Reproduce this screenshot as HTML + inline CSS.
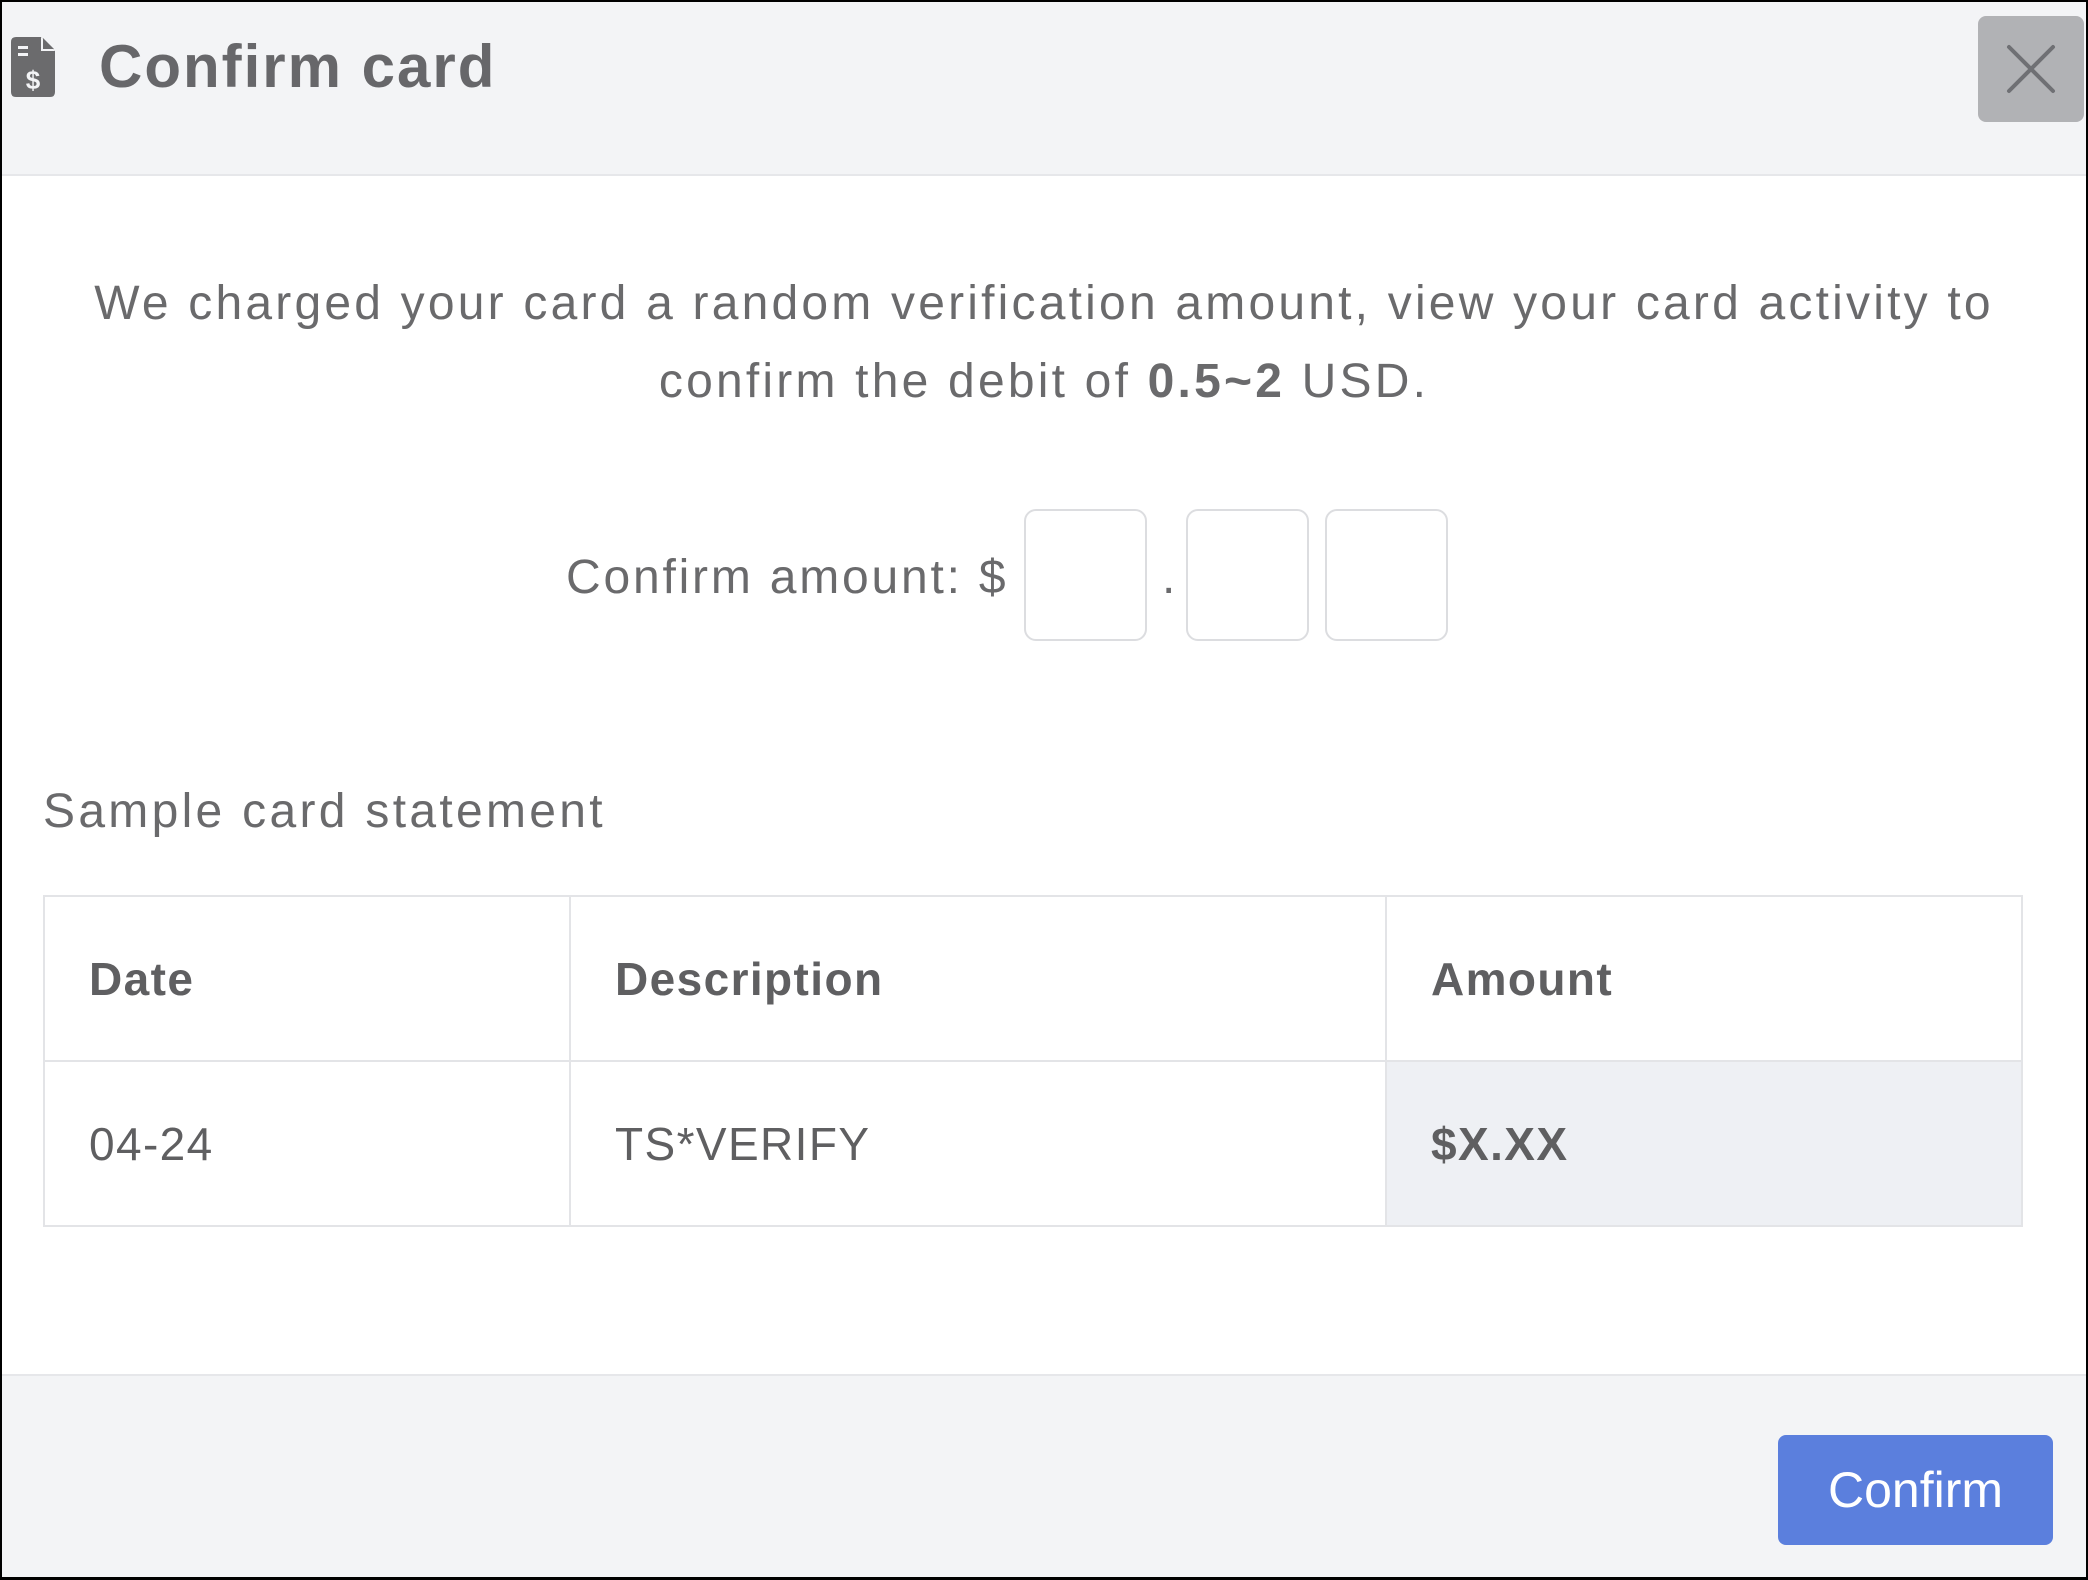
<!DOCTYPE html>
<html><head><style>
html,body{margin:0;padding:0}
body{width:2088px;height:1580px;position:relative;background:#000;font-family:"Liberation Sans",sans-serif;overflow:hidden}
.m{position:absolute;left:2px;top:2px;width:2084px;height:1575px;background:#fff;overflow:hidden}
.hd{position:absolute;left:0;top:0;width:2084px;height:172px;background:#f3f4f6;border-bottom:2px solid #e6e7ea}
.ft{position:absolute;left:0;top:1372px;width:2084px;height:210px;background:#f3f4f6;border-top:2px solid #e6e7ea}
.t{position:absolute;white-space:nowrap;color:#6a6a6c}
.box{position:absolute;top:507px;width:123px;height:132px;border:2px solid #dcdde0;border-radius:12px;background:#fff;box-sizing:border-box}
table{position:absolute;left:41px;top:893px;width:1980px;border-collapse:collapse}
td{border:2px solid #e3e4e7;font-size:46px;color:#5f5f61;padding:0 0 0 44px;height:163px;letter-spacing:1.4px}
</style></head><body>
<div class="m">
<div class="hd">
<svg style="position:absolute;left:9px;top:35px" width="44" height="60" viewBox="0 0 44 60"><path d="M5 0H30L44 14V55Q44 60 39 60H5Q0 60 0 55V5Q0 0 5 0Z" fill="#6b6b6d"/><path d="M30 0V14H44" fill="#f3f4f6"/><path d="M32 1V12H43" fill="#6b6b6d"/><rect x="7" y="9" width="10" height="3" fill="#f3f4f6"/><rect x="7" y="16" width="10" height="3" fill="#f3f4f6"/><text x="22" y="52" font-size="26" font-weight="bold" fill="#f3f4f6" text-anchor="middle" font-family="Liberation Sans">$</text></svg>
<div class="t" style="left:97px;top:30px;font-size:60px;font-weight:bold;color:#67676a;letter-spacing:2px">Confirm card</div>
<div style="position:absolute;left:1976px;top:14px;width:106px;height:106px;background:#b1b2b5;border-radius:8px">
<svg width="106" height="106" viewBox="0 0 106 106"><path d="M31 31L75 75M75 31L31 75" stroke="#6f7074" stroke-width="4" stroke-linecap="round"/></svg></div>
</div>
<div class="t" style="left:0;width:2084px;text-align:center;top:263px;font-size:48px;line-height:78px;white-space:normal;letter-spacing:3.2px">We charged your card a random verification amount, view your card activity to<br>confirm the debit of <b>0.5~2</b> USD.</div>
<div class="t" style="left:564px;top:548px;font-size:48px;letter-spacing:2.8px">Confirm amount: $</div>
<div class="box" style="left:1022px"></div>
<div class="t" style="left:1160px;top:548px;font-size:48px">.</div>
<div class="box" style="left:1184px"></div>
<div class="box" style="left:1323px"></div>
<div class="t" style="left:41px;top:782px;font-size:48px;letter-spacing:3.3px">Sample card statement</div>
<table>
<tr><td style="width:480px;font-weight:bold">Date</td><td style="width:770px;font-weight:bold">Description</td><td style="font-weight:bold">Amount</td></tr>
<tr><td>04-24</td><td>TS*VERIFY</td><td style="background:#eef0f4;font-weight:bold">$X.XX</td></tr>
</table>
<div class="ft">
<div style="position:absolute;left:1776px;top:59px;width:275px;height:110px;background:#5b7fdd;border-radius:8px;color:#fff;font-size:50px;text-align:center;line-height:110px">Confirm</div>
</div>
</div>
</body></html>
